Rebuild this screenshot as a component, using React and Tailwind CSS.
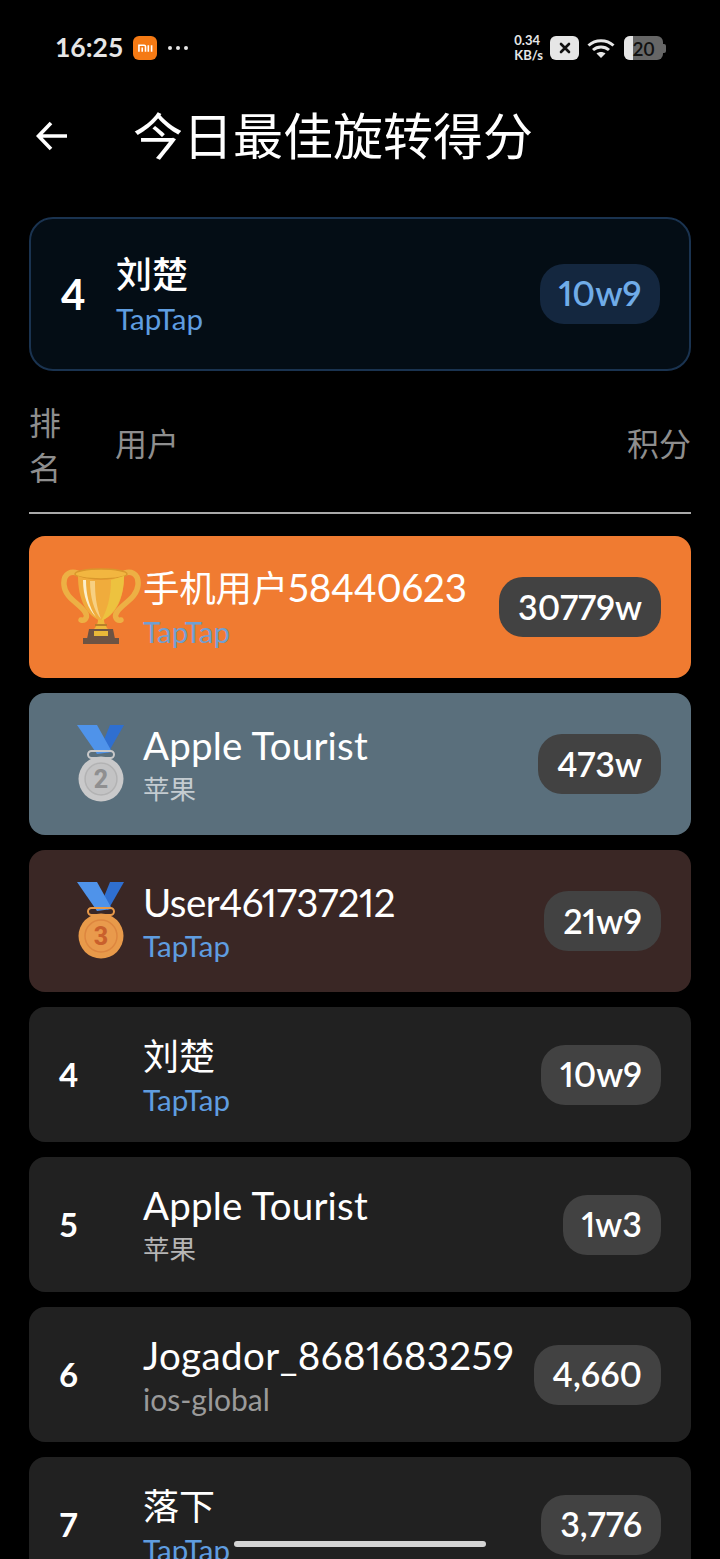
import React from "react";

const Trophy = () => (
  <svg viewBox="0 0 80 78" className="w-[80px] h-[78px]">
    {/* handles */}
    <path d="M22 8C10 0 2 6 3 17c1 13 15 18 21 27 3 4 1 9-4 8" fill="none" stroke="#edb044" strokeWidth="5.5" strokeLinecap="round" />
    <path d="M58 8C70 0 78 6 77 17c-1 13-15 18-21 27-3 4-1 9 4 8" fill="none" stroke="#edb044" strokeWidth="5.5" strokeLinecap="round" />
    {/* cup */}
    <ellipse cx="40" cy="6" rx="26" ry="5" fill="#f2b640" stroke="#d9972c" strokeWidth="1.5" />
    <path d="M17 8c0 24 9 40 23 45 14-5 23-21 23-45-13 5-33 5-46 0z" fill="#f0ac3c" />
    <path d="M50 12l13-4c0 22-9 39-23 45 6-10 10-24 10-41z" fill="#edc23f" />
    <path d="M25 12c0 14 3 27 10 37-8-8-13-21-13-37z" fill="#fbeecb" />
    <path d="M29 13h5c0 14 1 24 6 38-7-8-11-22-11-38z" fill="#fbe7b0" opacity="0.6" />
    {/* stem */}
    <path d="M37 52h6c0 6 5 9 7 14H30c2-5 7-8 7-14z" fill="#eeb93b" />
    <rect x="34" y="56" width="12" height="2" fill="#b9802a" />
    {/* base */}
    <path d="M28 61h24l2 10H26z" fill="#6d5343" />
    <rect x="22" y="70" width="36" height="6" fill="#6d5343" />
    <rect x="33" y="63" width="14" height="5" fill="#e8b838" />
  </svg>
);

const Medal = ({ n, ring, face, num }) => (
  <svg viewBox="0 0 48 78" className="w-[48px] h-[78px]">
    <path d="M24 22 L33 0 H47 L31 28z" fill="#2f6fd0" />
    <path d="M0 0 H20 L35 27 L20 29z" fill="#4f93ea" />
    <rect x="11" y="26" width="26" height="7" rx="3.5" fill="none" stroke={ring} strokeWidth="2" />
    <circle cx="24" cy="54" r="22.5" fill={ring} />
    <circle cx="24" cy="54" r="16" fill={face} stroke={num} strokeOpacity="0.35" strokeWidth="1.5" />
    <text x="24" y="63" textAnchor="middle" fontSize="25" fontWeight="800" fill={num} fontFamily="Roboto, sans-serif">{n}</text>
  </svg>
);

const rows = [
  {
    icon: <Trophy />,
    name: (
      <>
        <span className="text-[36.5px]">手机用户</span>58440623
      </>
    ),
    track: "tracking-[-0.25px]",
    sub: "TapTap", subSize: "text-[29.5px]", score: "30779w", bg: "bg-[#f07b31]", h: "h-[142px]", subColor: "text-[#719fd2]",
  },
  { icon: <Medal n="2" ring="#c9c9ca" face="#c3c3c4" num="#8f8f90" />, name: "Apple Tourist", track: "tracking-[0.2px]", sub: "苹果", subSize: "text-[26.5px]", score: "473w", bg: "bg-[#5a6f7c]", h: "h-[142px]", subColor: "text-[#c4ccd1]" },
  { icon: <Medal n="3" ring="#e89a4a" face="#e99a4c" num="#c9602c" />, name: "User461737212", track: "tracking-[-0.55px]", sub: "TapTap", subSize: "text-[29.5px]", score: "21w9", bg: "bg-[#3a2725]", h: "h-[142px]", subColor: "text-[#5f9de0]" },
  { rank: "4", name: <span className="text-[36px]">刘楚</span>, sub: "TapTap", subSize: "text-[29.5px]", score: "10w9", subColor: "text-[#5f9de0]" },
  { rank: "5", name: "Apple Tourist", track: "tracking-[0.2px]", sub: "苹果", subSize: "text-[26.5px]", score: "1w3", subColor: "text-[#b5b5b5]" },
  { rank: "6", name: "Jogador_8681683259", track: "tracking-[0.4px]", sub: "ios-global", subSize: "text-[30px]", score: "4,660", subColor: "text-[#9a9a9a]" },
  { rank: "7", name: <span className="text-[36px]">落下</span>, sub: "TapTap", subSize: "text-[29.5px]", score: "3,776", subColor: "text-[#5f9de0]" },
];

const StatusBar = () => (
  <div className="h-[96px] flex items-center justify-between pl-[55px] pr-[54px] text-[#e6e6e6]">
    <div className="flex items-center">
      <span className="text-[26.5px] font-bold w-[78px]">16:25</span>
      <div className="w-[24px] h-[24px] rounded-[6px] bg-[#f57a14] flex items-center justify-center">
        <svg viewBox="0 0 16 10" className="w-[15px] h-[10px]" fill="none" stroke="#fff" strokeWidth="1.7">
          <path d="M1 9V2h5.5a1.5 1.5 0 0 1 1.5 1.5V9M4.5 4.5V9M11 2v7M14.5 2v7" />
        </svg>
      </div>
      <div className="flex gap-[4px] ml-[11px]">
        <div className="w-[4px] h-[4px] rounded-full bg-[#e6e6e6]" />
        <div className="w-[4px] h-[4px] rounded-full bg-[#e6e6e6]" />
        <div className="w-[4px] h-[4px] rounded-full bg-[#e6e6e6]" />
      </div>
    </div>
    <div className="flex items-center">
      <div className="text-[13px] leading-[15px] font-bold flex flex-col">
        <span>0.34</span>
        <span>KB/s</span>
      </div>
      <div className="ml-[7px] w-[29px] h-[24px] rounded-[6px] bg-[#e6e6e6] flex items-center justify-center">
        <svg viewBox="0 0 12 12" className="w-[12px] h-[12px]" stroke="#111" strokeWidth="2.6" strokeLinecap="round">
          <path d="M2 2l8 8M10 2l-8 8" />
        </svg>
      </div>
      <svg viewBox="0 0 28 22" className="ml-[8px] w-[28px] h-[22px]" fill="none" stroke="#e6e6e6" strokeWidth="3">
        <path d="M1.5 8.5c7-6.5 18-6.5 25 0" />
        <path d="M6 13c4.5-4 11.5-4 16 0" />
        <path d="M14 21l-4.5-4.5c2.5-2 6.5-2 9 0z" fill="#e6e6e6" stroke="none" />
      </svg>
      <div className="ml-[9px] flex items-center">
        <div className="relative w-[39px] h-[24px] rounded-[6px] bg-[#666666] overflow-hidden flex items-center justify-center">
          <div className="absolute left-0 top-0 bottom-0 w-[9px] bg-[#e6e6e6]" />
          <span className="relative text-[19px] font-semibold text-[#111111] leading-none">20</span>
        </div>
        <div className="w-[3px] h-[9px] rounded-r-[2px] bg-[#666666]" />
      </div>
    </div>
  </div>
);

const Row = ({ row }) => (
  <div className={`flex items-center px-[30px] rounded-[16px] ${row.bg || "bg-[#212121]"} ${row.h || "h-[135px]"}`}>
    <div className="w-[84px] shrink-0">
      {row.icon ? (
        <div className="flex justify-center">{row.icon}</div>
      ) : (
        <span className="text-[33px] font-bold text-white">{row.rank}</span>
      )}
    </div>
    <div className="flex-1 min-w-0 flex flex-col">
      <span className={`text-[38.5px] leading-[48px] text-white whitespace-nowrap proportional-nums ${row.track || ""}`}>{row.name}</span>
      <span className={`leading-[38px] mt-[1px] ${row.subSize} ${row.subColor}`}>{row.sub}</span>
    </div>
    <div className="h-[60px] px-[19px] pb-[2px] rounded-[24px] bg-[#424242] flex items-center">
      <span className="text-[34px] font-semibold text-white proportional-nums">{row.score}</span>
    </div>
  </div>
);

export default function App() {
  return (
    <div className="relative h-[1559px] w-[720px] overflow-hidden bg-black font-['Lato','Noto_Sans_CJK_SC',sans-serif]">
      <StatusBar />

      <div className="h-[80px] flex items-center pl-[28px] text-white">
        <svg viewBox="0 0 48 48" className="w-[48px] h-[48px]" fill="none" stroke="currentColor" strokeWidth="3.6">
          <path d="M39 24H11M23 11 10.5 24 23 37" />
        </svg>
        <h1 className="ml-[57px] text-[50px] font-normal leading-none">今日最佳旋转得分</h1>
      </div>

      <div className="px-[29px] pt-[41px]">
        <div className="h-[154px] rounded-[24px] border-2 border-[#1a3350] bg-[#040d15] flex items-center pl-[30px] pr-[29px]">
          <span className="w-[55px] text-[42px] font-bold text-white">4</span>
          <div className="flex-1 flex flex-col">
            <span className="text-[36px] leading-[48px] font-medium text-white">刘楚</span>
            <span className="text-[29.5px] leading-[38px] mt-[2px] text-[#5f9de0]">TapTap</span>
          </div>
          <div className="h-[60px] w-[120px] pb-[2px] rounded-[24px] bg-[#14273f] flex items-center justify-center">
            <span className="text-[34.5px] font-semibold text-[#70ace8] proportional-nums">10w9</span>
          </div>
        </div>

        <div className="h-[143px] pt-[5px] border-b-2 border-[#a9a9a9] flex items-center text-[32px] text-[#8e8e8e]">
          <span className="w-[86px] shrink-0 leading-[45px] mt-[2px]">排<br />名</span>
          <span className="flex-1">用户</span>
          <span>积分</span>
        </div>

        <div className="mt-[22px] flex flex-col gap-[15px]">
          {rows.map((row, i) => (
            <Row key={i} row={row} />
          ))}
        </div>
      </div>

      <div className="absolute left-[234px] top-[1541px] w-[252px] h-[6px] rounded-full bg-[#d4d4d4]" />
    </div>
  );
}
